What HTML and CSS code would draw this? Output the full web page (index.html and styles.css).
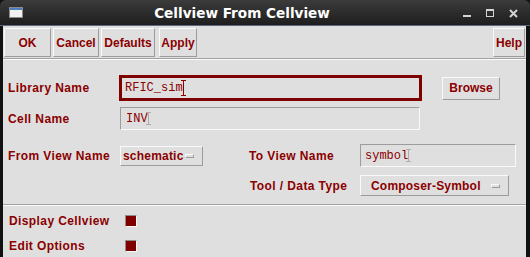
FILE: index.html
```html
<!DOCTYPE html>
<html lang="en">
<head>
    <meta charset="UTF-8">
    <title>Cellview From Cellview</title>
    <link rel="stylesheet" href="styles.css">
</head>
<body>
<div class="window">
    <div class="titlebar">
        <svg class="app-icon" width="14" height="11" viewBox="0 0 14 11">
            <rect x="0.5" y="0.5" width="13" height="10" fill="#f2f2f2" stroke="#8a8a8a"/>
            <rect x="1" y="1" width="12" height="2" fill="#4a7fc0"/>
        </svg>
        <div class="title">Cellview From Cellview</div>
        <div class="controls">
            <svg width="9" height="9" viewBox="0 0 9 9"><rect x="0" y="6" width="8" height="2" fill="#d4d4d4"/></svg>
            <svg width="9" height="9" viewBox="0 0 9 9"><rect x="0.5" y="0.5" width="7" height="7" fill="none" stroke="#d4d4d4"/><rect x="0" y="0" width="8" height="2" fill="#d4d4d4"/></svg>
            <svg width="9" height="9" viewBox="0 0 9 9"><path d="M1 1 L8 8 M8 1 L1 8" stroke="#d4d4d4" stroke-width="2"/></svg>
        </div>
    </div>
    <div class="client">
        <div class="toolbar">
            <button class="btn btn-ok">OK</button>
            <button class="btn btn-cancel">Cancel</button>
            <button class="btn btn-defaults">Defaults</button>
            <button class="btn btn-apply">Apply</button>
            <button class="btn btn-help">Help</button>
        </div>
        <div class="sep"></div>

        <div class="form">
            <div class="row row-lib">
                <span class="label w-lib">Library Name</span>
                <div class="field field-active w-libfield">RFIC_sim<span class="caret"></span></div>
                <button class="btn btn-browse">Browse</button>
            </div>
            <div class="row row-cell">
                <span class="label w-label">Cell Name</span>
                <div class="field w-cellfield">INV<span class="caret caret-dim"></span></div>
            </div>
            <div class="row row-view">
                <span class="label w-label">From View Name</span>
                <div class="cycle w-from">schematic<span class="mark"></span></div>
                <span class="label w-to">To View Name</span>
                <div class="field w-tofield">symbol<span class="caret caret-dim"></span></div>
            </div>
            <div class="row row-tool">
                <span class="label w-tool">Tool / Data Type</span>
                <div class="cycle cycle-wide w-toolfield">Composer-Symbol<span class="mark"></span></div>
            </div>
        </div>

        <div class="sep sep-low"></div>

        <div class="options">
            <div class="row row-check">
                <span class="label w-check">Display Cellview</span>
                <span class="check"></span>
            </div>
            <div class="row row-check row-edit">
                <span class="label w-check">Edit Options</span>
                <span class="check"></span>
            </div>
        </div>
    </div>
</div>
</body>
</html>
```

FILE: styles.css
```css
body {
    margin: 0;
    background: #000;
    font-family: "Liberation Sans", Arial, sans-serif;
}
.window {
    width: 530px;
    height: 257px;
    display: flex;
    flex-direction: column;
    background: #111;
    overflow: hidden;
}

/* title bar */
.titlebar {
    height: 25px;
    display: flex;
    align-items: center;
    background: linear-gradient(#3b3b3b, #1e1e1e);
    border-bottom: 1px solid #5a6b80;
    border-radius: 6px 6px 0 0;
}
.app-icon {
    margin-left: 9px;
}
.title {
    flex: 1;
    text-align: center;
    padding-right: 2px;
    color: #fff;
    font-family: "DejaVu Sans", sans-serif;
    font-weight: bold;
    font-size: 13.6px;
}
.controls {
    display: flex;
    gap: 14px;
    margin-right: 12px;
    padding-top: 1px;
}

/* dialog area */
.client {
    flex: 1;
    margin: 0 4px 0 3px;
    background: #dfdfdf;
}
.toolbar {
    display: flex;
    padding: 2px 1px 1px 1px;
}
.btn {
    font-family: "Liberation Sans", Arial, sans-serif;
    font-weight: bold;
    font-size: 12px;
    color: #8b0000;
    background: #dfdfdf;
    border: 1px solid;
    border-color: #fafafa #9c9c9c #9c9c9c #fafafa;
    padding: 0;
    margin: 0;
    height: 29px;
}
.btn-ok { width: 47px; margin-right: 2px; }
.btn-cancel { width: 46px; margin-right: 2px; }
.btn-defaults { width: 54px; margin-right: 4px; }
.btn-apply { width: 38px; }
.btn-help { width: 32px; margin-left: auto; }

.sep {
    height: 1px;
    border-top: 1px solid #a2a2a2;
    background: #fafafa;
}

.form {
    padding: 15px 0 0 5px;
}
.options {
    padding: 9px 0 0 5px;
}
.row {
    display: flex;
    align-items: center;
}
.label {
    font-weight: bold;
    font-size: 12px;
    letter-spacing: 0.4px;
    color: #8b0000;
}
.row-lib { height: 26px; }
.row-cell { height: 23px; margin-top: 6px; }
.row-view { height: 23px; margin-top: 14px; }
.row-tool { height: 21px; margin-top: 8px; }
.sep-low { margin-top: 8px; }
.row-check { height: 12px; }
.row-edit { margin-top: 13px; }

.w-lib { width: 111px; }
.w-label { width: 112px; }
.w-to { width: 111px; margin-left: 46px; }
.w-tool { width: 110px; margin-left: 242px; }
.w-check { width: 116px; padding-left: 1px; }

.field {
    box-sizing: border-box;
    height: 23px;
    display: flex;
    align-items: center;
    padding-left: 5px;
    font-family: "Liberation Mono", "Courier New", monospace;
    font-size: 12px;
    color: #8b0000;
    border: 1px solid;
    border-color: #9c9c9c #fafafa #fafafa #9c9c9c;
}
.field-active {
    height: 26px;
    border: 3px solid #800000;
    padding-left: 3px;
}
.w-libfield { width: 303px; }
.w-cellfield { width: 300px; }
.w-tofield { width: 156px; padding-left: 4px; }

.caret {
    width: 1px;
    height: 16px;
    background: #8b0000;
    position: relative;
}
.caret::before,
.caret::after {
    content: "";
    position: absolute;
    left: -2px;
    width: 5px;
    height: 1px;
    background: inherit;
}
.caret::before { top: 0; }
.caret::after { bottom: 0; }
.caret-dim {
    background: #b8a8a8;
    height: 13px;
}

.btn-browse {
    width: 58px;
    height: 23px;
    margin-left: 20px;
}

.cycle {
    box-sizing: border-box;
    height: 20px;
    display: flex;
    align-items: center;
    font-weight: bold;
    font-size: 12px;
    letter-spacing: 0.2px;
    color: #8b0000;
    padding-left: 2px;
    border: 1px solid;
    border-color: #fafafa #9c9c9c #9c9c9c #fafafa;
}
.w-from { width: 83px; }
.cycle-wide {
    height: 21px;
    padding-left: 10px;
}
.w-toolfield { width: 149px; }
.mark {
    box-sizing: border-box;
    width: 9px;
    height: 4px;
    margin-left: auto;
    margin-right: 8px;
    border: 1px solid;
    border-color: #fafafa #9c9c9c #9c9c9c #fafafa;
}

.check {
    box-sizing: border-box;
    width: 12px;
    height: 12px;
    background: #800000;
    border: 1px solid;
    border-color: #8e8e8e #fafafa #fafafa #8e8e8e;
}
```
